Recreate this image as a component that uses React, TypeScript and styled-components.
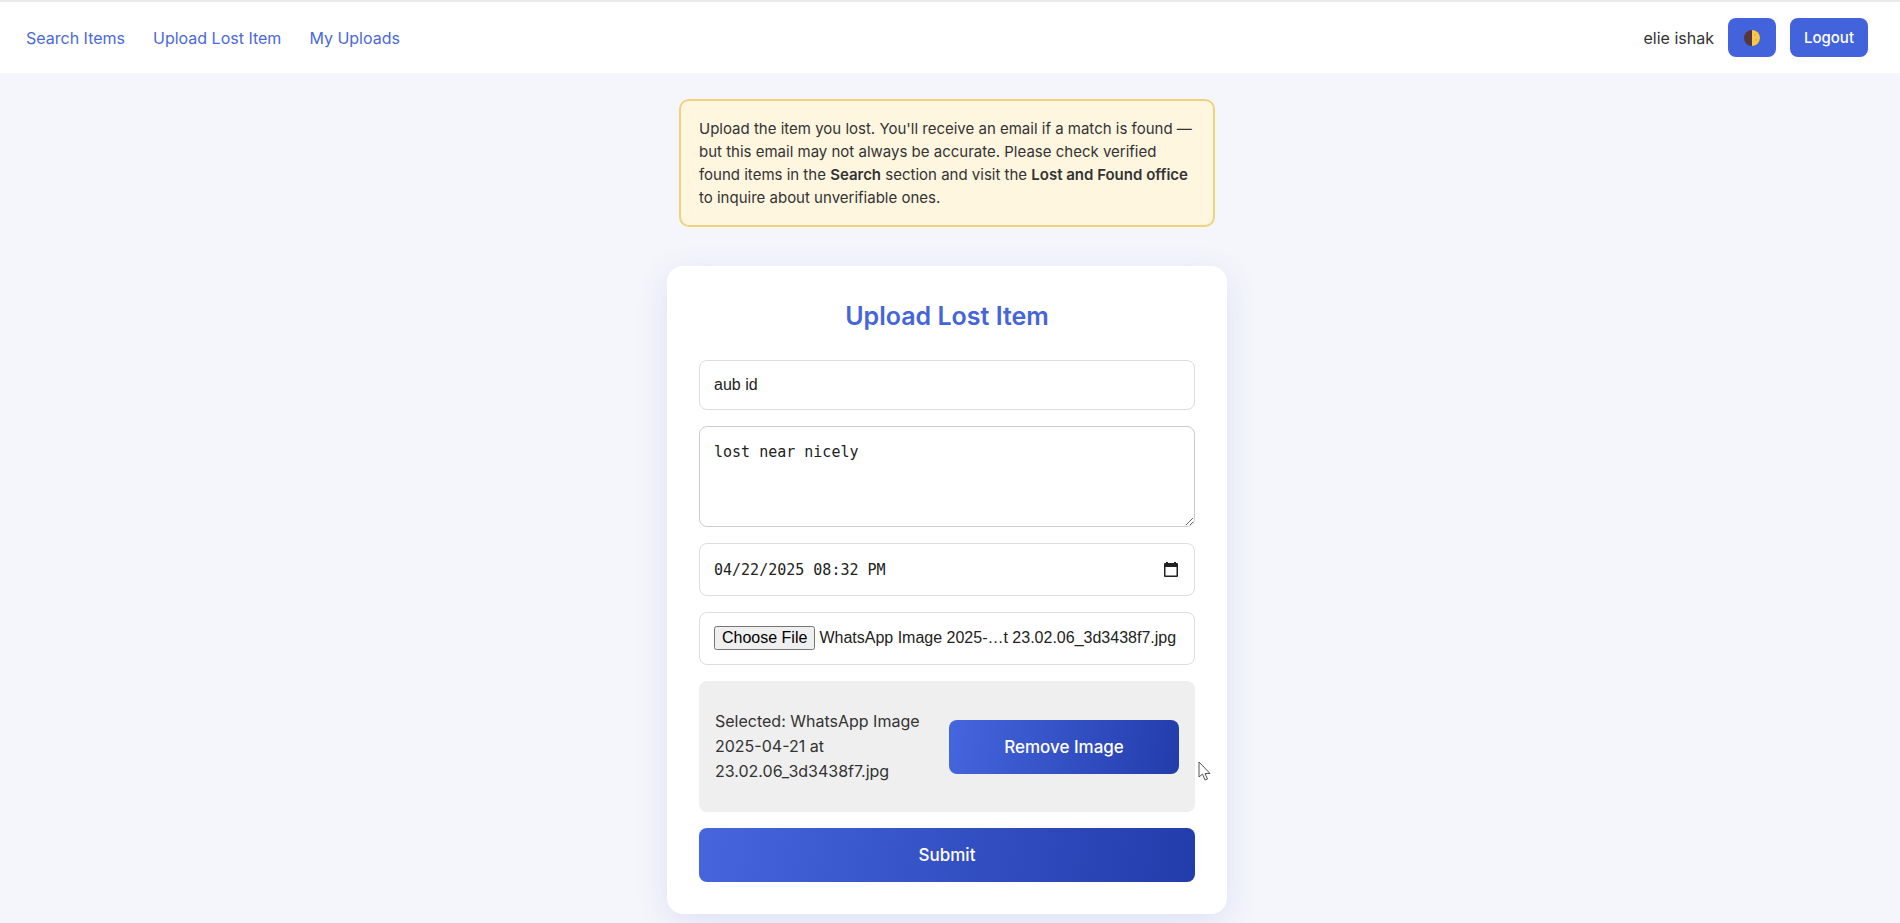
import React, { useEffect, useRef, useState } from "react";
import styled, { createGlobalStyle, css } from "styled-components";

const FILE_NAME = "WhatsApp Image 2025-04-21 at 23.02.06_3d3438f7.jpg";

const GlobalStyle = createGlobalStyle`
  *, *::before, *::after { box-sizing: border-box; }
  body {
    margin: 0;
    background: #f4f6fb;
    color: #333;
    font-family: Inter, "Open Sans", sans-serif;
    font-size: 16px;
  }
`;

const Page = styled.div`
  min-height: 100vh;
  border-top: 2px solid #e9e9e9;
  display: flex;
  flex-direction: column;
`;

const Header = styled.header`
  display: flex;
  align-items: center;
  justify-content: space-between;
  background: #fff;
  padding: 16px 32px 16px 26px;
`;

const Nav = styled.nav`
  display: flex;
  gap: 28px;
`;

const NavLink = styled.a`
  color: #4a69dc;
  font-size: 16px;
  line-height: 24px;
  text-decoration: none;
`;

const Account = styled.div`
  display: flex;
  align-items: center;
  gap: 14px;
`;

const UserName = styled.span`
  font-size: 16px;
  line-height: 24px;
`;

const HeaderButton = styled.button`
  display: flex;
  align-items: center;
  justify-content: center;
  height: 39px;
  padding: 0 14px;
  border: 0;
  border-radius: 8px;
  background: #4263dc;
  color: #fff;
  font: 500 15px/24px Inter, "Open Sans", sans-serif;
  cursor: pointer;
`;

const Main = styled.main`
  display: flex;
  flex-direction: column;
  align-items: center;
  gap: 39px;
  padding: 26px 6px 10px 0;
`;

const Notice = styled.p`
  width: 100%;
  max-width: 536px;
  margin: 0;
  padding: 16px 18px;
  border: 2px solid #f0d27c;
  border-radius: 10px;
  background: #fff6e0;
  font-size: 15px;
  line-height: 23px;

  strong { font-weight: 600; }
`;

const Card = styled.form`
  width: 100%;
  max-width: 560px;
  display: flex;
  flex-direction: column;
  gap: 16px;
  padding: 32px;
  border-radius: 16px;
  background: #fff;
  box-shadow: 0 8px 32px rgba(80, 85, 210, 0.13);
`;

const Title = styled.h2`
  margin: 0 0 10px;
  color: #4565d8;
  font-size: 25px;
  font-weight: 600;
  line-height: 36px;
  text-align: center;
`;

const field = css`
  display: block;
  width: 100%;
  margin: 0;
  padding: 12px 14px;
  border: 1px solid #ddd;
  border-radius: 8px;
  background: #fff;
  color: #222;
`;

const TextField = styled.input`
  ${field}
  height: 50px;
  font: 16px "Liberation Sans", sans-serif;
`;

const TextArea = styled.textarea`
  ${field}
  height: 101px;
  padding-top: 16px;
  border-color: #ccc;
  font: 15px "DejaVu Sans Mono", monospace;
  resize: vertical;
`;

const DateField = styled.div`
  ${field}
  display: flex;
  align-items: center;
  height: 53px;
`;

const DateInput = styled.input`
  flex: 1;
  min-width: 0;
  padding: 0;
  border: 0;
  outline: 0;
  background: none;
  color: #222;
  font: 15px "DejaVu Sans Mono", monospace;
`;

const CalendarButton = styled.button`
  display: flex;
  padding: 2px;
  border: 0;
  background: none;
  cursor: pointer;
`;

const FileField = styled.input`
  ${field}
  height: 53px;
  padding-top: 13px;
  font: 16px "Liberation Sans", sans-serif;
`;

const Preview = styled.div`
  position: relative;
  display: flex;
  align-items: center;
  gap: 16px;
  padding: 28px 16px;
  border-radius: 8px;
  background: #efefef;
`;

const PreviewText = styled.p`
  flex: 1;
  margin: 0;
  font-size: 16px;
  line-height: 25px;
`;

const ActionButton = styled.button<{ $width: string }>`
  flex: none;
  width: ${(p) => p.$width};
  height: 54px;
  border: 0;
  border-radius: 8px;
  background: linear-gradient(100deg, #4666de, #223cab);
  color: #fff;
  font: 500 17px/24px Inter, "Open Sans", sans-serif;
  cursor: pointer;
`;

const Pointer = styled.svg`
  position: absolute;
  right: -16px;
  top: 80px;
`;

const QuarterMoon = () => (
  <svg width="20" height="20" viewBox="0 0 20 20" aria-hidden="true">
    <circle cx="10" cy="10" r="8" fill="#54373f" />
    <path d="M10 2a8 8 0 0 1 0 16z" fill="#f6c84c" />
    <circle cx="13" cy="7" r="1" fill="#e5ae3c" />
    <circle cx="14" cy="12" r="1" fill="#e5ae3c" />
  </svg>
);

const CalendarIcon = () => (
  <svg width="14" height="15" viewBox="0 0 14 15" aria-hidden="true">
    <path d="M2 0h2v2H2zM10 0h2v2h-2z" fill="#222" />
    <path
      fillRule="evenodd"
      d="M1 1h12a1 1 0 0 1 1 1v12a1 1 0 0 1-1 1H1a1 1 0 0 1-1-1V2a1 1 0 0 1 1-1zM1.500 5v8.500h11V5z"
      fill="#222"
    />
  </svg>
);

export default function App() {
  const fileRef = useRef<HTMLInputElement>(null);
  const dateRef = useRef<HTMLInputElement>(null);
  const [selected, setSelected] = useState(FILE_NAME);

  useEffect(() => {
    const transfer = new DataTransfer();
    transfer.items.add(new File([""], FILE_NAME, { type: "image/jpeg" }));
    if (fileRef.current) fileRef.current.files = transfer.files;
  }, []);

  const removeImage = () => {
    if (fileRef.current) fileRef.current.value = "";
    setSelected("");
  };

  return (
    <>
      <GlobalStyle />
      <Page>
        <Header>
          <Nav>
            <NavLink href="#search">Search Items</NavLink>
            <NavLink href="#upload">Upload Lost Item</NavLink>
            <NavLink href="#mine">My Uploads</NavLink>
          </Nav>
          <Account>
            <UserName>elie ishak</UserName>
            <HeaderButton type="button" aria-label="Toggle theme">
              <QuarterMoon />
            </HeaderButton>
            <HeaderButton type="button">Logout</HeaderButton>
          </Account>
        </Header>
        <Main>
          <Notice>
            Upload the item you lost. You'll receive an email if a match is found — but this email
            may not always be accurate. Please check verified found items in the{" "}
            <strong>Search</strong> section and visit the <strong>Lost and Found office</strong> to
            inquire about unverifiable ones.
          </Notice>
          <Card onSubmit={(e) => e.preventDefault()}>
            <Title>Upload Lost Item</Title>
            <TextField type="text" aria-label="Item name" defaultValue="aub id" />
            <TextArea aria-label="Description" defaultValue="lost near nicely" />
            <DateField>
              <DateInput
                ref={dateRef}
                type="text"
                aria-label="Date and time lost"
                defaultValue="04/22/2025 08:32 PM"
              />
              <CalendarButton
                type="button"
                aria-label="Pick a date"
                onClick={() => dateRef.current?.focus()}
              >
                <CalendarIcon />
              </CalendarButton>
            </DateField>
            <FileField
              ref={fileRef}
              type="file"
              accept="image/*"
              aria-label="Item image"
              onChange={(e) => setSelected(e.target.files?.[0]?.name ?? "")}
            />
            {selected && (
              <Preview>
                <PreviewText>Selected: {selected}</PreviewText>
                <ActionButton type="button" $width="230px" onClick={removeImage}>
                  Remove Image
                </ActionButton>
                <Pointer width="13" height="20" viewBox="0 0 13 20" aria-hidden="true">
                  <path
                    d="M1 1v15l3.500-3 2.500 6 2.500-1-2.500-5.500h5z"
                    fill="#fff"
                    stroke="#555"
                    strokeLinejoin="round"
                  />
                </Pointer>
              </Preview>
            )}
            <ActionButton type="submit" $width="100%">
              Submit
            </ActionButton>
          </Card>
        </Main>
      </Page>
    </>
  );
}
